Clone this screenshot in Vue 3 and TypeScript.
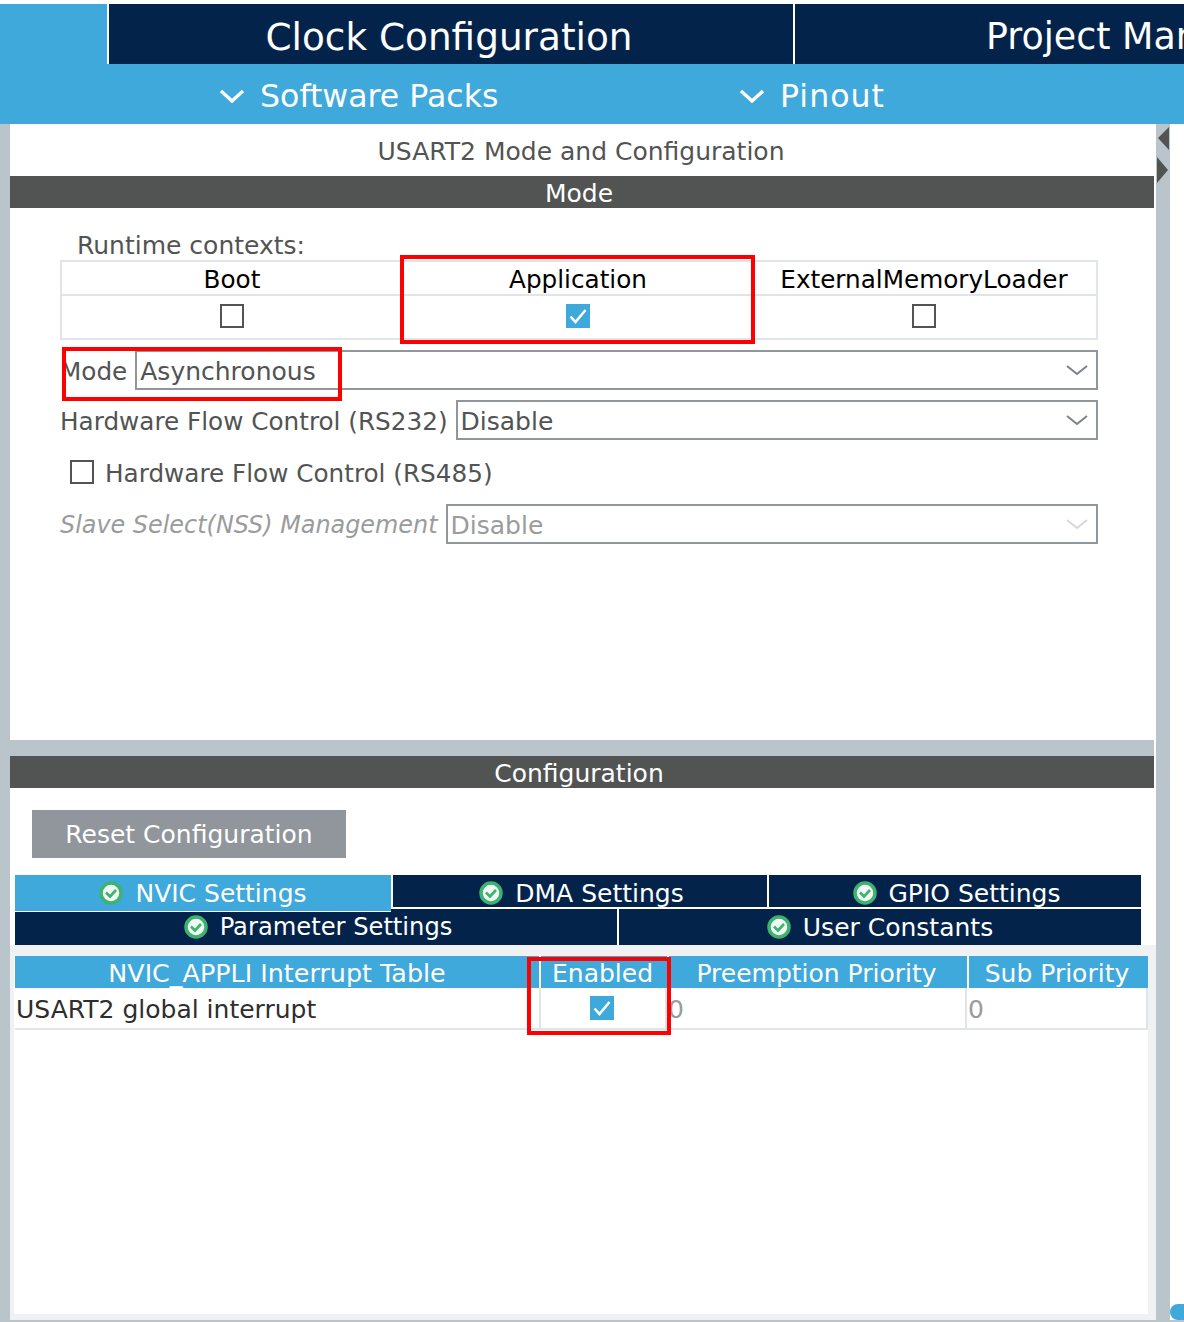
<template>
  <div class="app">
    <header class="top-tabs">
      <div class="top-spacer"></div>
      <div class="top-tab clock"><span>Clock Configuration</span></div>
      <div class="top-tab project"><span>Project Manager</span></div>
    </header>
    <nav class="sub-tabs">
      <div class="sub-tab packs"><svg class="sub-chevron" viewBox="0 0 26 16"><path d="M2 3 L13 13 L24 3" /></svg>Software Packs</div>
      <div class="sub-tab pinout"><svg class="sub-chevron" viewBox="0 0 26 16"><path d="M2 3 L13 13 L24 3" /></svg>Pinout</div>
    </nav>

    <div class="workspace">
      <div class="gutter"></div>
      <main class="panel">
        <section class="mode-pane">
          <h1 class="pane-title">USART2 Mode and Configuration</h1>
          <div class="bar">Mode</div>
          <div class="mode-body">
            <div class="runtime-label">Runtime contexts:</div>
            <div class="contexts">
              <div v-for="ctx in contexts" :key="ctx.name" class="context-col">
                <div class="context-name">{{ ctx.name }}</div>
                <div class="context-check">
                  <span class="box" :class="{ checked: ctx.on }">
                    <svg v-if="ctx.on" viewBox="0 0 24 24"><path d="M4.5 12.5 L9.5 18 L19.5 6" /></svg>
                  </span>
                </div>
              </div>
            </div>

            <div class="field">
              <label class="field-label">Mode</label>
              <div class="select">
                <span>Asynchronous</span>
                <svg class="select-arrow" viewBox="0 0 22 12"><path d="M1 2 L11 10 L21 2" /></svg>
              </div>
            </div>
            <div class="field">
              <label class="field-label">Hardware Flow Control (RS232)</label>
              <div class="select">
                <span>Disable</span>
                <svg class="select-arrow" viewBox="0 0 22 12"><path d="M1 2 L11 10 L21 2" /></svg>
              </div>
            </div>
            <div class="check-row">
              <span class="box"></span>
              <span class="check-label">Hardware Flow Control (RS485)</span>
            </div>
            <div class="field disabled">
              <label class="field-label">Slave Select(NSS) Management</label>
              <div class="select">
                <span>Disable</span>
                <svg class="select-arrow" viewBox="0 0 22 12"><path d="M1 2 L11 10 L21 2" /></svg>
              </div>
            </div>
          </div>
        </section>

        <div class="splitter"></div>

        <section class="config-pane">
          <div class="bar">Configuration</div>
          <div class="config-head">
            <button class="reset-btn">Reset Configuration</button>
          </div>
          <div class="tabs-row three">
            <div v-for="tab in tabsTop" :key="tab" class="tab" :class="{ active: tab === 'NVIC Settings' }">
              <svg class="ok-icon" viewBox="0 0 24 24"><circle cx="12" cy="12" r="10" /><path d="M7 11.5 L11 15.5 L17 9" /></svg>
              {{ tab }}
            </div>
          </div>
          <div class="tabs-row two">
            <div v-for="tab in tabsBottom" :key="tab" class="tab">
              <svg class="ok-icon" viewBox="0 0 24 24"><circle cx="12" cy="12" r="10" /><path d="M7 11.5 L11 15.5 L17 9" /></svg>
              {{ tab }}
            </div>
          </div>
          <div class="table-area">
            <div class="table-sheet">
              <div class="nvic-table">
                <div class="th wide">NVIC_APPLI Interrupt Table</div>
                <div class="th">Enabled</div>
                <div class="th">Preemption Priority</div>
                <div class="th">Sub Priority</div>
                <div class="td name">USART2 global interrupt</div>
                <div class="td enabled">
                  <span class="box checked"><svg viewBox="0 0 24 24"><path d="M4.5 12.5 L9.5 18 L19.5 6" /></svg></span>
                </div>
                <div class="td zero">0</div>
                <div class="td zero">0</div>
              </div>
            </div>
          </div>
        </section>
      </main>
      <aside class="scrollbar">
        <svg class="scroll-arrow" viewBox="0 0 12 26"><path d="M1 11 L12 0 L12 23 Z" /></svg>
        <svg class="scroll-arrow" viewBox="0 0 12 26"><path d="M11 13 L0 0 L0 26 Z" /></svg>
      </aside>
    </div>

    <div class="red-box app-mark"></div>
    <div class="red-box mode-mark"></div>
    <div class="red-box enabled-mark"></div>
    <div class="help-dot"></div>
  </div>
</template>

<script setup lang="ts">
const contexts = [
  { name: 'Boot', on: false },
  { name: 'Application', on: true },
  { name: 'ExternalMemoryLoader', on: false },
];

const tabsTop = ['NVIC Settings', 'DMA Settings', 'GPIO Settings'];
const tabsBottom = ['Parameter Settings', 'User Constants'];
</script>

<style>
html,
body {
  margin: 0;
  background: #fff;
}
</style>

<style scoped>
.app {
  position: relative;
  width: 1184px;
  height: 1322px;
  overflow: hidden;
  padding-top: 4px;
  box-sizing: border-box;
  background: #fff;
  font-family: "DejaVu Sans", sans-serif;
  font-size: 25px;
  color: #525453;
}

.top-tabs {
  display: flex;
  height: 60px;
  background: #3fa9dc;
}

.top-spacer {
  width: 107px;
  flex: none;
}

.top-tab {
  height: 60px;
  border-left: 2px solid #fff;
  background: #03234b;
  color: #fff;
  font-size: 37.4px;
  line-height: 66px;
  white-space: nowrap;
  box-sizing: border-box;
  overflow: hidden;
}

.clock {
  width: 686px;
  flex: none;
  padding-right: 4px;
  text-align: center;
}

.project {
  flex: 1;
  padding-left: 191px;
  font-size: 36.4px;
}

.sub-tabs {
  display: flex;
  height: 60px;
  background: #3fa9dc;
  color: #fff;
  font-size: 31.6px;
  line-height: 62px;
  white-space: nowrap;
}

.sub-tab {
  display: flex;
  align-items: center;
  padding-top: 3px;
  box-sizing: border-box;
}

.packs {
  padding-left: 219px;
  width: 520px;
  flex: none;
}

.pinout {
  padding-left: 219px;
  letter-spacing: 1px;
}

.sub-chevron {
  width: 26px;
  height: 16px;
  margin-right: 15px;
}

.sub-chevron path {
  fill: none;
  stroke: #fff;
  stroke-width: 3.4;
}

.workspace {
  display: flex;
  height: 1198px;
  border-bottom: 2px solid #b9c4cb;
  box-sizing: border-box;
}

.gutter {
  width: 10px;
  flex: none;
  background: #b9c4cb;
}

.panel {
  width: 1146px;
  flex: none;
  display: flex;
  flex-direction: column;
}

.mode-pane {
  height: 616px;
  flex: none;
}

.pane-title {
  margin: 0;
  height: 52px;
  width: 1144px;
  padding-right: 2px;
  box-sizing: border-box;
  font-size: 25px;
  font-weight: 400;
  line-height: 56px;
  text-align: center;
}

.bar {
  height: 32px;
  width: 1144px;
  padding-right: 6px;
  box-sizing: border-box;
  background: #525453;
  color: #fff;
  font-size: 25px;
  line-height: 36px;
  text-align: center;
}

.mode-body {
  padding: 20px 0 0 50px;
}

.runtime-label {
  height: 32px;
  line-height: 36px;
  padding-left: 17px;
}

.contexts {
  display: grid;
  grid-template-columns: 346px 346px 342px;
  width: 1038px;
  box-sizing: border-box;
  border: 2px solid #e1e5e9;
}

.context-col {
  display: flex;
  flex-direction: column;
}

.context-name {
  height: 34px;
  padding-right: 6px;
  line-height: 36px;
  box-sizing: border-box;
  border-bottom: 2px solid #e1e5e9;
  color: #000;
  font-size: 24.7px;
  text-align: center;
  white-space: nowrap;
}

.context-check {
  height: 42px;
  padding: 0 6px 2px 0;
  box-sizing: border-box;
  display: flex;
  align-items: center;
  justify-content: center;
}

.context-col:last-child .context-name,
.context-col:last-child .context-check {
  padding-right: 2px;
}

.box {
  display: inline-block;
  width: 24px;
  height: 24px;
  flex: none;
  box-sizing: border-box;
  border: 2px solid #525453;
  background: #fff;
}

.box.checked {
  border: 0;
  background: #3fa9dc;
}

.box svg {
  display: block;
  width: 24px;
  height: 24px;
}

.box svg path {
  fill: none;
  stroke: #fff;
  stroke-width: 2.6;
}

.field {
  display: flex;
  align-items: stretch;
  width: 1038px;
  height: 40px;
  margin-top: 10px;
  font-size: 24.7px;
}

.field-label {
  flex: none;
  margin-right: 8px;
  line-height: 43px;
  white-space: nowrap;
}

.select {
  flex: 1;
  display: flex;
  align-items: center;
  justify-content: space-between;
  box-sizing: border-box;
  border: 2px solid #90969c;
  padding-left: 3px;
  font-size: 25px;
  line-height: 36px;
}

.select span {
  padding-top: 3px;
}

.select-arrow {
  width: 22px;
  height: 12px;
  margin-right: 8px;
}

.select-arrow path {
  fill: none;
  stroke: #7d8287;
  stroke-width: 2;
}

.check-row {
  display: flex;
  align-items: center;
  gap: 11px;
  height: 24px;
  margin-top: 20px;
  padding-left: 10px;
  font-size: 24.7px;
  line-height: 26px;
}

.check-label {
  padding-top: 3px;
}

.field.disabled {
  margin-top: 20px;
  color: #9a9c9c;
}

.field.disabled .field-label {
  font-size: 23.9px;
  font-style: italic;
}

.field.disabled .select-arrow path {
  stroke: #d6d8da;
}

.splitter {
  height: 16px;
  flex: none;
  width: 1144px;
  background: #b9c4cb;
}

.config-pane {
  flex: 1;
  min-height: 0;
  display: flex;
  flex-direction: column;
}

.config-head {
  padding: 22px 0 17px 22px;
}

.reset-btn {
  display: block;
  width: 314px;
  height: 48px;
  border: 0;
  padding: 0;
  background: #90969c;
  color: #fff;
  font-family: inherit;
  font-size: 25px;
}

.tabs-row {
  display: grid;
  width: 1126px;
  margin-left: 5px;
  column-gap: 2px;
  flex: none;
}

.tabs-row.three {
  grid-template-columns: 376px 374px 372px;
  height: 34px;
  align-items: start;
}

.tabs-row.two {
  grid-template-columns: 602px 522px;
  height: 36px;
}

.tab {
  display: flex;
  align-items: center;
  justify-content: center;
  gap: 12px;
  box-sizing: border-box;
  background: #03234b;
  color: #fff;
  white-space: nowrap;
}

.tabs-row.three .tab {
  height: 32px;
  padding-top: 4px;
  padding-left: 3px;
}

.tabs-row.three .tab.active {
  position: relative;
  z-index: 1;
  height: 37px;
  padding: 0;
  border-bottom: 1px solid #fff;
  background: #3fa9dc;
}

.tabs-row.two .tab {
  height: 36px;
}

.tabs-row.two .tab:first-child {
  font-size: 24.2px;
  padding-left: 4px;
}

.ok-icon {
  width: 24px;
  height: 24px;
  flex: none;
}

.ok-icon circle {
  fill: #f2f8f2;
  stroke: #3cb371;
  stroke-width: 3.5;
}

.ok-icon path {
  fill: none;
  stroke: #3cb371;
  stroke-width: 2.6;
}

.table-area {
  flex: 1;
  min-height: 0;
  background: #f0f1f3;
  padding: 0 8px 6px 4px;
}

.table-sheet {
  height: 100%;
  background: #fff;
  box-sizing: border-box;
  border-top: 11px solid #f0f1f3;
}

.nvic-table {
  display: grid;
  grid-template-columns: 524px 128px 300px 181px;
  margin-left: 1px;
}

.th {
  height: 32px;
  padding-right: 3px;
  background: #3fa9dc;
  color: #fff;
  line-height: 35px;
  text-align: center;
  border-left: 2px solid #fff;
  box-sizing: border-box;
  white-space: nowrap;
}

.th.wide {
  padding-right: 0;
  border-left: 0;
  font-size: 25.4px;
}

.td {
  height: 42px;
  border-bottom: 2px solid #e1e5e9;
  border-right: 2px solid #e1e5e9;
  box-sizing: border-box;
  line-height: 43px;
}

.td.name {
  padding-left: 1px;
  border-right: 0;
  color: #2e2e2e;
  white-space: nowrap;
}

.td.enabled {
  display: flex;
  align-items: center;
  justify-content: center;
  padding-right: 2px;
  border-left: 2px solid #e1e5e9;
}

.td.zero {
  color: #9a9c9c;
  padding-left: 1px;
}

.scrollbar {
  width: 14px;
  flex: none;
  padding-top: 3px;
  background: #b9c4cb;
  box-sizing: border-box;
  display: flex;
  flex-direction: column;
  align-items: center;
  gap: 4px;
}

.scroll-arrow {
  width: 12px;
  height: 26px;
  fill: #525453;
}

.red-box {
  position: absolute;
  box-sizing: border-box;
  border: 4px solid #fe0000;
}

.app-mark {
  left: 400px;
  top: 255px;
  width: 355px;
  height: 89px;
}

.mode-mark {
  left: 62px;
  top: 347px;
  width: 280px;
  height: 54px;
}

.enabled-mark {
  left: 527px;
  top: 957px;
  width: 144px;
  height: 78px;
}

.help-dot {
  position: absolute;
  left: 1170px;
  top: 1304px;
  width: 24px;
  height: 16px;
  border-radius: 8px;
  background: #3fa9dc;
}
</style>
